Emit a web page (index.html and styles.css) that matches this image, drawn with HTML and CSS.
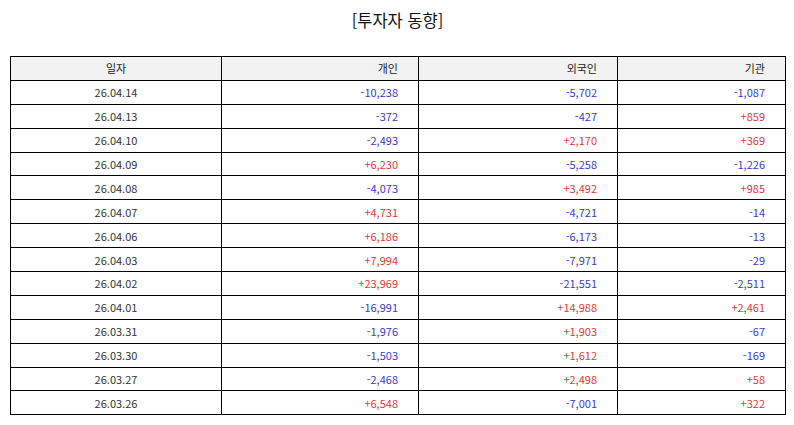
FILE: index.html
```html
<!DOCTYPE html>
<html lang="ko">
<head>
<meta charset="utf-8">
<link rel="stylesheet" href="styles.css">
</head>
<body>
<div class="page">
  <h1 class="title">[투자자 동향]</h1>
  <table class="grid">
    <colgroup>
      <col class="c-date"><col class="c-ind"><col class="c-for"><col class="c-inst">
    </colgroup>
    <thead>
      <tr><th class="center">일자</th><th>개인</th><th>외국인</th><th>기관</th></tr>
    </thead>
    <tbody>
      <tr><td class="center">26.04.14</td><td class="neg">-10,238</td><td class="neg">-5,702</td><td class="neg">-1,087</td></tr>
      <tr><td class="center">26.04.13</td><td class="neg">-372</td><td class="neg">-427</td><td class="pos">+859</td></tr>
      <tr><td class="center">26.04.10</td><td class="neg">-2,493</td><td class="pos">+2,170</td><td class="pos">+369</td></tr>
      <tr><td class="center">26.04.09</td><td class="pos">+6,230</td><td class="neg">-5,258</td><td class="neg">-1,226</td></tr>
      <tr><td class="center">26.04.08</td><td class="neg">-4,073</td><td class="pos">+3,492</td><td class="pos">+985</td></tr>
      <tr><td class="center">26.04.07</td><td class="pos">+4,731</td><td class="neg">-4,721</td><td class="neg">-14</td></tr>
      <tr><td class="center">26.04.06</td><td class="pos">+6,186</td><td class="neg">-6,173</td><td class="neg">-13</td></tr>
      <tr><td class="center">26.04.03</td><td class="pos">+7,994</td><td class="neg">-7,971</td><td class="neg">-29</td></tr>
      <tr><td class="center">26.04.02</td><td class="pos">+23,969</td><td class="neg">-21,551</td><td class="neg">-2,511</td></tr>
      <tr><td class="center">26.04.01</td><td class="neg">-16,991</td><td class="pos">+14,988</td><td class="pos">+2,461</td></tr>
      <tr><td class="center">26.03.31</td><td class="neg">-1,976</td><td class="pos">+1,903</td><td class="neg">-67</td></tr>
      <tr><td class="center">26.03.30</td><td class="neg">-1,503</td><td class="pos">+1,612</td><td class="neg">-169</td></tr>
      <tr><td class="center">26.03.27</td><td class="neg">-2,468</td><td class="pos">+2,498</td><td class="pos">+58</td></tr>
      <tr><td class="center">26.03.26</td><td class="pos">+6,548</td><td class="neg">-7,001</td><td class="pos">+322</td></tr>
    </tbody>
  </table>
</div>
</body>
</html>
```
FILE: styles.css
```css
html, body {
  margin: 0;
  padding: 0;
  background: #ffffff;
}
body {
  font-family: "Noto Sans CJK KR", "Noto Sans", sans-serif;
  color: #222222;
}
.page {
  padding: 0 9px 0 10px;
}
.title {
  margin: 0;
  padding-top: 9px;
  height: 56px;
  box-sizing: border-box;
  font-size: 16.5px;
  line-height: 22px;
  font-weight: normal;
  text-align: center;
  color: #111111;
}
.grid {
  width: 775px;
  border-collapse: collapse;
  table-layout: fixed;
  font-size: 11px;
}
.c-date { width: 211px; }
.c-ind { width: 197px; }
.c-for { width: 199px; }
.c-inst { width: 168px; }
.grid th, .grid td {
  border: 1px solid #000000;
  padding: 0 20px 0 4px;
  height: 22.9px;
  text-align: right;
  font-weight: normal;
  line-height: 14px;
  color: #333333;
}
.grid th {
  background: #f2f2f2;
  color: #222222;
}
.grid .center {
  text-align: center;
  padding: 0 4px;
}
.grid .neg { color: #3a3acc; }
.grid .pos { color: #e03a3a; }
```
